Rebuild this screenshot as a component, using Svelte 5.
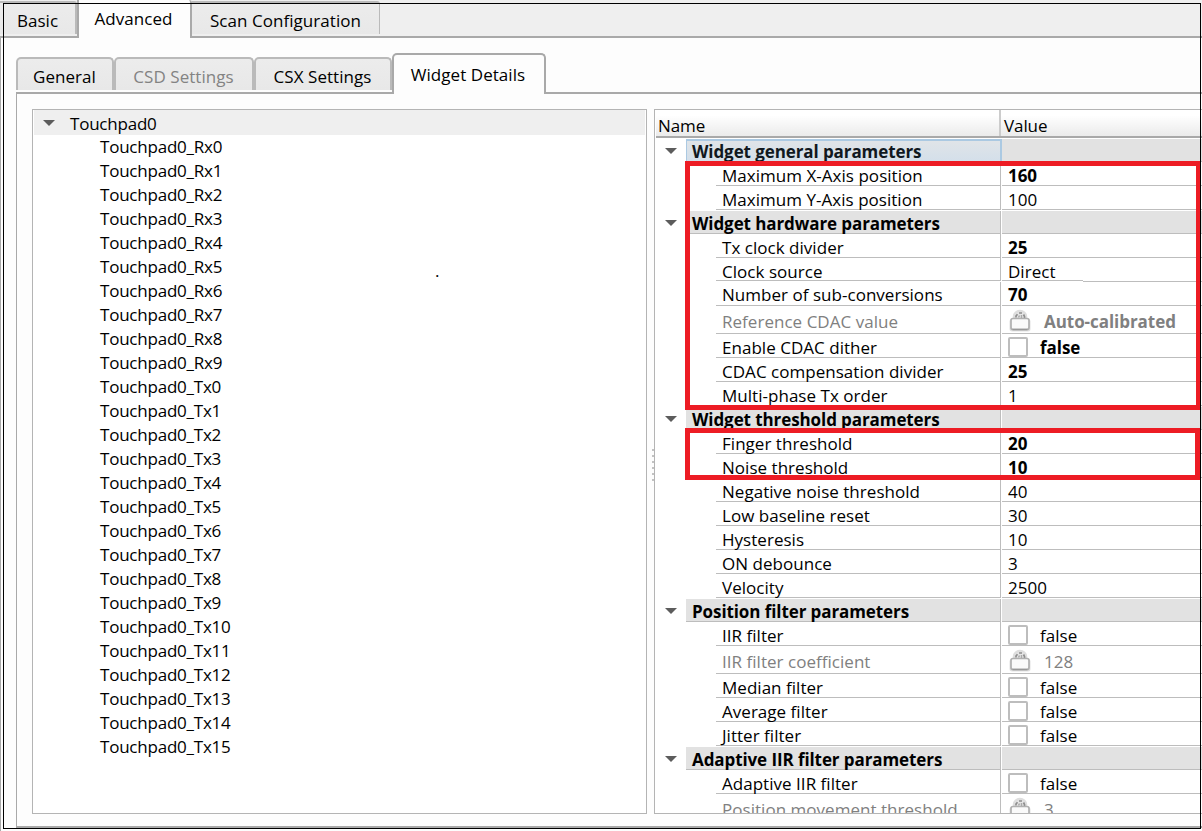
<script>
  const sensors = [
    ...Array.from({ length: 10 }, (_, i) => `Touchpad0_Rx${i}`),
    ...Array.from({ length: 16 }, (_, i) => `Touchpad0_Tx${i}`)
  ];

  const rows = [
    { group: 'Widget general parameters', selected: true },
    { name: 'Maximum X-Axis position', value: '160', bold: true },
    { name: 'Maximum Y-Axis position', value: '100' },
    { group: 'Widget hardware parameters' },
    { name: 'Tx clock divider', value: '25', bold: true },
    { name: 'Clock source', value: 'Direct', edit: true },
    { name: 'Number of sub-conversions', value: '70', bold: true, raised: true },
    { name: 'Reference CDAC value', value: 'Auto-calibrated', bold: true, locked: true },
    { name: 'Enable CDAC dither', value: 'false', bold: true, check: true },
    { name: 'CDAC compensation divider', value: '25', bold: true },
    { name: 'Multi-phase Tx order', value: '1' },
    { group: 'Widget threshold parameters' },
    { name: 'Finger threshold', value: '20', bold: true },
    { name: 'Noise threshold', value: '10', bold: true },
    { name: 'Negative noise threshold', value: '40' },
    { name: 'Low baseline reset', value: '30' },
    { name: 'Hysteresis', value: '10' },
    { name: 'ON debounce', value: '3' },
    { name: 'Velocity', value: '2500' },
    { group: 'Position filter parameters' },
    { name: 'IIR filter', value: 'false', check: true },
    { name: 'IIR filter coefficient', value: '128', locked: true },
    { name: 'Median filter', value: 'false', check: true },
    { name: 'Average filter', value: 'false', check: true },
    { name: 'Jitter filter', value: 'false', check: true },
    { group: 'Adaptive IIR filter parameters' },
    { name: 'Adaptive IIR filter', value: 'false', check: true },
    { name: 'Position movement threshold', value: '3', locked: true }
  ];
</script>

{#snippet arrow()}
  <svg class="arrow" width="12" height="6" viewBox="0 0 12 6"><path d="M0 0H12L6 6Z" fill="#5c5c5c" /></svg>
{/snippet}

{#snippet lock()}
  <svg class="lock" width="22" height="24" viewBox="0 0 22 24">
    <path d="M5 11V8.5a6 5.5 0 0 1 12 0V11" fill="#e6e6e6" stroke="#dedede" stroke-width="2.5" />
    <path d="M7 9.5V8l1.5-1.8M10 5h3M14.5 6.5l1 2v2" fill="none" stroke="#8d8d8d" stroke-width="1.7" />
    <path d="M9.5 9.5l1-2M12.5 7v3" stroke="#aaa" stroke-width="1.5" />
    <rect x="0.5" y="11" width="21" height="12.5" rx="2.5" fill="#e2e2e2" />
    <rect x="2" y="10.5" width="18" height="11" rx="2" fill="#fafafa" stroke="#b0b0b0" stroke-width="1.7" />
    <path d="M3.5 21.5H18.5" stroke="#989898" stroke-width="1.6" />
  </svg>
{/snippet}

<div class="window">
  <nav class="tabs outer">
    <div class="tab basic"><span>Basic</span></div>
    <div class="tab advanced active"><span>Advanced</span></div>
    <div class="tab scan"><span>Scan Configuration</span></div>
  </nav>
  <section class="page">
    <nav class="tabs inner">
      <div class="tab general"><span>General</span></div>
      <div class="tab csd"><span>CSD Settings</span></div>
      <div class="tab csx"><span>CSX Settings</span></div>
      <div class="tab details active"><span>Widget Details</span></div>
    </nav>
    <div class="pane">
      <div class="tree">
        <div class="root">{@render arrow()}<span>Touchpad0</span></div>
        {#each sensors as s}
          <div class="leaf">{s}</div>
        {/each}
        <i class="speck">.</i>
      </div>
      <div class="splitter">
        {#each Array(6) as _}<i></i>{/each}
      </div>
      <div class="table">
        <div class="head"><div class="hname">Name</div><div class="hvalue">Value</div></div>
        {#each rows as r}
          {#if r.group}
            <div class="row group" class:selected={r.selected}>
              <div class="toggle">{@render arrow()}</div>
              <div class="gname"><span>{r.group}</span></div>
              <div class="value"></div>
            </div>
          {:else}
            <div class="row" class:locked={r.locked} class:edit={r.edit} class:raised={r.raised}>
              <div class="name"><span>{r.name}</span></div>
              <div class="value" class:bold={r.bold}>
                {#if r.locked}{@render lock()}{/if}
                {#if r.check}<b class="check"></b>{/if}
                <span>{r.value}</span>
              </div>
            </div>
          {/if}
        {/each}
      </div>
    </div>
  </section>
  <div class="outline"></div>
  <div class="mark first"></div>
  <div class="mark second"></div>
</div>

<style>
  .window {
    position: relative;
    box-sizing: border-box;
    width: 1202px;
    height: 831px;
    overflow: hidden;
    background: #efefef;
    color: #000;
    font: 17px/24px 'Open Sans', 'Noto Sans', sans-serif;
    white-space: nowrap;
    display: flex;
    flex-direction: column;
  }
  .tabs { display: flex; align-items: flex-end; box-sizing: border-box; flex: none; letter-spacing: 0.05px; }
  .tab {
    box-sizing: border-box;
    background: linear-gradient(#ececec, #e8e8e8);
    border: 2px solid #bababa;
    border-bottom: 0;
    border-radius: 5px 5px 0 0;
    text-align: center;
  }
  .tab.active { background: #fdfdfd; border-color: #a9a9a9; position: relative; }
  .outer { height: 38px; background: linear-gradient(#a9a9a9, #a9a9a9) 0 36px / 100% 2px no-repeat, #efefef; }
  .outer .tab { height: 33px; margin-bottom: 4px; padding-top: 6px; border-radius: 0 3px 0 0; }
  .outer .tab.active { height: 38px; margin-bottom: 0; border-top: 0; padding: 7px 2px 0 0; }
  .basic { width: 77px; border-left-width: 0; }
  .advanced { width: 115px; }
  .scan { width: 188px; border-width: 2px 1px 0 0 !important; }
  .page {
    flex: 1;
    box-sizing: border-box;
    padding: 15px 0 3px 15px;
    border-left: 1px solid #a9a9a9;
    background: #fdfdfd;
    display: flex;
    flex-direction: column;
    min-height: 0;
  }
  .inner { height: 41px; background: linear-gradient(#a9a9a9, #a9a9a9) 0 39px / 100% 2px no-repeat; }
  .inner .tab { height: 33px; margin-bottom: 4px; padding: 6px 1px 0 0; }
  .inner .tab.active { height: 41px; margin-bottom: 0; padding: 8px 2px 0 0; }
  .general { width: 98px; }
  .csd { width: 140px; color: #838383; }
  .csx { width: 138px; }
  .details { width: 154px; }
  .pane {
    flex: 1;
    min-height: 0;
    box-sizing: border-box;
    border-left: 1px solid #a9a9a9;
    border-bottom: 2px solid #a9a9a9;
    padding: 15px 0 12px 15px;
    display: flex;
  }
  .tree {
    position: relative;
    box-sizing: border-box;
    width: 615px;
    border: 1px solid #b4b4b4;
    background: #fff;
    padding-left: 1px;
    letter-spacing: -0.22px;
  }
  .root { height: 25px; margin-right: 1px; background: #efefef; display: flex; align-items: center; padding: 0 0 0 9px; }
  .root span { margin-left: 15px; padding-top: 3px; }
  .leaf { height: 24px; padding-left: 66px; }
  .speck { position: absolute; left: 402px; top: 149px; font-style: normal; }
  .splitter { width: 7px; display: flex; flex-direction: column; justify-content: center; align-items: flex-end; gap: 4px; padding-top: 7px; box-sizing: border-box; }
  .splitter i { width: 2px; height: 2px; background: #c2c2c2; }
  .table { flex: 1; box-sizing: border-box; overflow: hidden; border: 1px solid #b4b4b4; border-right: 0; background: #fff; min-width: 0; letter-spacing: 0.03px; }
  .head { height: 28px; box-sizing: border-box; display: flex; margin-left: 1px; border-bottom: 2px solid #a9a9a9; background: linear-gradient(#fff 20%, #ebebeb); line-height: 31px; letter-spacing: -0.1px; }
  .hname { width: 345px; box-sizing: border-box; border-right: 2px solid #ccc; padding-left: 2px; }
  .hvalue { padding-left: 3px; }
  .row { display: flex; height: 24px; }
  .row.locked { height: 28px; }
  .name { box-sizing: border-box; width: 285px; margin-left: 61px; padding-left: 6px; border-right: 1px solid #bdbdbd; border-bottom: 1px solid #bdbdbd; }
  .name span, .value span { position: relative; top: 2px; }
  .raised .name span, .raised .value span { top: 1px; }
  .edit .name { height: 23px; }
  .edit .value {
    border-bottom: 0;
    background:
      linear-gradient(#bdbdbd, #bdbdbd) 0 22px / 81px 1px no-repeat,
      linear-gradient(#bdbdbd, #bdbdbd) 81px 23px / 200px 1px no-repeat;
  }
  .toggle { width: 31px; padding: 2px 0 0 10px; box-sizing: border-box; display: flex; align-items: center; }
  .gname { width: 315px; box-sizing: border-box; padding-left: 6px; margin-top: 1px; border-right: 1px solid #bdbdbd; border-bottom: 1px solid #bdbdbd; background: #e2e2e2; font-weight: 700; letter-spacing: -0.09px; }
  .gname span { position: relative; top: 1px; }
  .group .value { background: #e2e2e2; margin-top: 1px; }
  .selected .gname { background: linear-gradient(#e0e4e8, #d3dfea); border: 2px solid #abc9e2; border-width: 2px 2px 0 1px; padding-left: 5px; color: #101820; width: 316px; }
  .selected .value { margin-left: 0; }
  .selected .gname span { top: -1px; }
  .value { flex: 1; box-sizing: border-box; margin-left: 1px; padding-left: 6px; border-bottom: 1px solid #bdbdbd; display: flex; align-items: flex-start; }
  .bold { font-weight: 700; letter-spacing: -0.05px; }
  .locked { color: #808080; line-height: 28px; }
  .lock { margin: 2px 13px 0 1px; flex: none; }
  .check { box-sizing: border-box; width: 20px; height: 20px; border: 2px solid #bdbdbd; border-radius: 2px; margin: 3px 12px 0 0; }
  .outline { position: absolute; left: 3px; top: 3px; width: 1196px; height: 824px; border: 1px solid #000; }
  .mark { position: absolute; left: 685px; width: 515px; box-sizing: border-box; border: 5px solid #ed1c24; }
  .first { top: 161px; height: 249px; border-right-width: 4px; }
  .second { top: 428px; height: 52px; }
</style>
